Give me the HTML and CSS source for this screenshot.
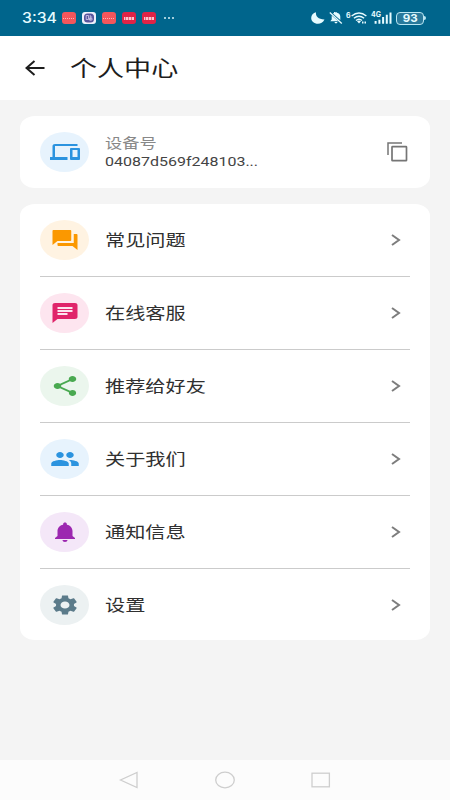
FILE: index.html
```html
<!DOCTYPE html>
<html lang="zh-CN">
<head>
<meta charset="UTF-8">
<title>个人中心</title>
<link rel="stylesheet" href="styles.css">
</head>
<body>
<div class="screen">
  <div class="status">
    <span class="time"><span class="wide">3:34</span></span>
    <div class="apps">
      <i class="app coral"></i>
      <i class="app pale"><svg viewBox="0 0 14 12"><rect x="2" y="1.5" width="10" height="9" rx="3.5" fill="#58549c"/><path d="M4.2 3.5h2.3v4H4.2zM8.2 3v5.500M8.200 5h2M7.500 8h2.500V6.300H7.500z" fill="none" stroke="#d5cfee" stroke-width=".8"/></svg></i>
      <i class="app coral"></i>
      <i class="app red"></i>
      <i class="app red"></i>
    </div>
    <div class="dots"><i></i><i></i><i></i></div>
    <div class="signals">
      <svg class="moon" viewBox="0 0 14 12"><path d="M5 .3C4.300 4 7.500 7.600 13.500 7.500C12 10.500 9.500 11.800 7 11.800C3 11.800.2 9.200.2 6C.2 3.300 2.200 1 5 .3Z" fill="#e6fbff"/></svg>
      <svg class="mute" viewBox="0 0 14 12"><path d="M3.900 1.600C4.500 1 5.500.9 6 .7C6.300-.1 7.700-.1 8 .7C10 1 11.300 2.700 11.300 4.500V8ZM2.700 3.400L9.300 9.300H1.300L2.700 7.500ZM5.400 10H8.600C8 11.900 6 11.900 5.400 10Z" fill="#e6fbff"/><path d="M.8.600L12.800 11.400" stroke="#e6fbff" stroke-width="1.300"/></svg>
      <span class="six">6</span>
      <svg class="wifi" viewBox="0 0 16 12"><g fill="none" stroke="#e6fbff" stroke-width="1.400"><path d="M.6 4Q8-2 15.400 4M2.900 6.300Q8 2 13.100 6.300M5 8.500Q8 5.800 11 8.500"/></g><path d="M6 9.300Q8 7.700 10 9.300L8 11.600Z" fill="#e6fbff"/><path d="M11 9.500h1.500V11.500H11zM13.500 9.500H15V11.500h-1.500z" fill="#e6fbff"/></svg>
      <div class="cell"><span class="gen">4G</span><svg viewBox="0 0 18 12"><path d="M.6 9h2v2.700h-2zM4.400 7.800h2v3.900h-2zM8.100 5h2v6.700h-2zM11.800 2.800h2v8.900h-2zM15.500.5h2v11.200h-2z" fill="#e6fbff"/></svg></div>
      <div class="battery"><span>93</span></div><i class="cap"></i>
    </div>
  </div>

  <header class="header">
    <svg class="back" viewBox="0 0 20 18"><path d="M19.500 9H1.500M9.500 2L1.500 9L9.500 16" fill="none" stroke="#1d1d1d" stroke-width="2"/></svg>
    <h1><span class="wide">个人中心</span></h1>
  </header>

  <main class="content">
    <section class="card device">
      <div class="bubble blue"><svg viewBox="0 0 24 24" preserveAspectRatio="none"><path d="M4 6h18V4H4c-1.100 0-2 .9-2 2v11H0v3h14v-3H4V6zm19 2h-6c-.55 0-1 .45-1 1v10c0 .55.45 1 1 1h6c.55 0 1-.45 1-1V9c0-.55-.45-1-1-1zm-1 9h-4v-7h4v7z"/></svg></div>
      <div class="info">
        <div class="caption"><span class="wide">设备号</span></div>
        <div class="number"><span class="wide">04087d569f248103...</span></div>
      </div>
      <svg class="copy" viewBox="0 0 21 20"><path d="M1 13V1H15" fill="none" stroke="#757575" stroke-width="1.500"/><rect x="5" y="4.700" width="14.500" height="14" rx=".5" fill="none" stroke="#757575" stroke-width="1.700"/></svg>
    </section>

    <section class="card menu">
      <div class="row">
        <div class="bubble orange"><svg viewBox="0 0 24 24" preserveAspectRatio="none"><path d="M21 6h-2v9H6v2c0 .55.45 1 1 1h11l4 4V7c0-.55-.45-1-1-1zm-4 6V3c0-.55-.45-1-1-1H3c-.55 0-1 .45-1 1v14l4-4h10c.55 0 1-.45 1-1z"/></svg></div>
        <span class="label wide">常见问题</span>
        <svg class="chevron" viewBox="0 0 10 12"><path d="M1 1L8 6L1 11"/></svg>
      </div>
      <div class="row">
        <div class="bubble pink"><svg viewBox="0 0 24 24" preserveAspectRatio="none"><path d="M20 2H4c-1.100 0-1.990.9-1.990 2L2 22l4-4h14c1.100 0 2-.9 2-2V4c0-1.100-.9-2-2-2zM6 9h12v2H6V9zm8 5H6v-2h8v2zm4-6H6V6h12v2z"/></svg></div>
        <span class="label wide">在线客服</span>
        <svg class="chevron" viewBox="0 0 10 12"><path d="M1 1L8 6L1 11"/></svg>
      </div>
      <div class="row">
        <div class="bubble green"><svg viewBox="0 0 24 24" preserveAspectRatio="none"><path d="M18 16.080c-.76 0-1.440.3-1.960.77L8.910 12.700c.05-.23.09-.46.09-.7s-.04-.47-.09-.7l7.050-4.110c.54.5 1.250.81 2.040.81 1.660 0 3-1.340 3-3s-1.340-3-3-3-3 1.340-3 3c0 .24.04.47.09.7L8.040 9.810C7.500 9.310 6.790 9 6 9c-1.660 0-3 1.340-3 3s1.340 3 3 3c.79 0 1.500-.31 2.040-.81l7.120 4.160c-.05.21-.08.43-.08.65 0 1.610 1.310 2.920 2.920 2.920s2.920-1.310 2.920-2.920-1.310-2.920-2.920-2.920z"/></svg></div>
        <span class="label wide">推荐给好友</span>
        <svg class="chevron" viewBox="0 0 10 12"><path d="M1 1L8 6L1 11"/></svg>
      </div>
      <div class="row">
        <div class="bubble blue"><svg viewBox="0 0 24 24" preserveAspectRatio="none"><path d="M16 11c1.660 0 2.990-1.340 2.990-3S17.660 5 16 5s-3 1.340-3 3 1.340 3 3 3zm-8 0c1.660 0 2.990-1.340 2.990-3S9.660 5 8 5 5 6.340 5 8s1.340 3 3 3zm0 2c-2.330 0-7 1.170-7 3.500V19h14v-2.500c0-2.330-4.670-3.500-7-3.500zm8 0c-.29 0-.62.02-.97.05 1.160.84 1.970 1.970 1.970 3.450V19h6v-2.500c0-2.330-4.670-3.500-7-3.500z"/></svg></div>
        <span class="label wide">关于我们</span>
        <svg class="chevron" viewBox="0 0 10 12"><path d="M1 1L8 6L1 11"/></svg>
      </div>
      <div class="row">
        <div class="bubble purple"><svg viewBox="0 0 24 24" preserveAspectRatio="none"><path d="M12 22c1.100 0 2-.9 2-2h-4c0 1.100.89 2 2 2zm6-6v-5c0-3.070-1.640-5.640-4.500-6.320V4c0-.83-.67-1.500-1.500-1.500s-1.500.67-1.500 1.500v.68C7.630 5.360 6 7.920 6 11v5l-2 2v1h16v-1l-2-2z"/></svg></div>
        <span class="label wide">通知信息</span>
        <svg class="chevron" viewBox="0 0 10 12"><path d="M1 1L8 6L1 11"/></svg>
      </div>
      <div class="row">
        <div class="bubble slate"><svg viewBox="0 0 24 24" preserveAspectRatio="none"><path d="M19.140 12.940c.04-.3.06-.61.06-.94 0-.32-.02-.64-.07-.94l2.030-1.580c.18-.14.23-.41.12-.61l-1.920-3.320c-.12-.22-.37-.29-.59-.22l-2.390.96c-.5-.38-1.030-.7-1.620-.94l-.36-2.540c-.04-.24-.24-.41-.48-.41h-3.840c-.24 0-.43.17-.47.41l-.36 2.540c-.59.24-1.130.57-1.620.94l-2.390-.96c-.22-.08-.47 0-.59.22L2.740 8.870c-.12.21-.08.47.12.61l2.030 1.580c-.05.3-.09.63-.09.94s.02.64.07.94l-2.030 1.580c-.18.14-.23.41-.12.61l1.920 3.320c.12.22.37.29.59.22l2.390-.96c.5.38 1.030.7 1.620.94l.36 2.540c.05.24.24.41.48.41h3.840c.24 0 .44-.17.47-.41l.36-2.540c.59-.24 1.130-.56 1.620-.94l2.390.96c.22.08.47 0 .59-.22l1.920-3.320c.12-.22.07-.47-.12-.61l-2.010-1.580zM12 15.600c-1.980 0-3.600-1.620-3.600-3.600s1.620-3.600 3.600-3.600 3.600 1.620 3.600 3.600-1.620 3.600-3.600 3.600z"/></svg></div>
        <span class="label wide">设置</span>
        <svg class="chevron" viewBox="0 0 10 12"><path d="M1 1L8 6L1 11"/></svg>
      </div>
    </section>
  </main>

  <nav class="navbar">
    <svg viewBox="0 0 20 18"><path d="M18 1.500V16.500L1.500 9Z"/></svg>
    <svg viewBox="0 0 20 18"><ellipse cx="10" cy="9" rx="9.300" ry="7.800"/></svg>
    <svg viewBox="0 0 20 18"><rect x="1" y="2.200" width="17.400" height="13.600"/></svg>
  </nav>
</div>
</body>
</html>
```

FILE: styles.css
```css
* {
  box-sizing: border-box;
}

body {
  margin: 0;
  font-family: Roboto, "Noto Sans CJK SC", sans-serif;
}

.screen {
  width: 450px;
  height: 800px;
  display: flex;
  flex-direction: column;
  overflow: hidden;
  background: #f4f4f4;
}

svg {
  display: block;
  flex: none;
}

.wide {
  display: inline-block;
  white-space: nowrap;
  transform: scaleX(1.23);
  transform-origin: left center;
}

.status {
  height: 36px;
  flex: none;
  display: flex;
  align-items: center;
  padding: 0 24px 0 22px;
  background: #00658c;
  color: #e6fbff;
}

.time {
  width: 39.5px;
  font: 500 14.5px/20px Inter, sans-serif;
}

.time .wide {
  transform: scaleX(1.09);
}

.apps {
  display: flex;
  gap: 6px;
}

.app {
  width: 14px;
  height: 12px;
  border-radius: 3px;
  display: flex;
  align-items: center;
  justify-content: center;
}

.app svg {
  width: 14px;
  height: 12px;
}

.coral {
  background: #f4565c;
}

.coral::after {
  content: "";
  width: 11px;
  border-top: 1px dotted #ffb5b5;
}

.pale {
  background: #eef0fb;
}

.red {
  background: #df2346;
}

.red::after {
  content: "";
  width: 10px;
  height: 3px;
  background: repeating-linear-gradient(90deg, #ffc4cd 0 1px, #e86a80 1px 2px, #ffc4cd 2px 3px);
}

.dots {
  display: flex;
  gap: 2px;
  margin-left: 8px;
}

.dots i {
  width: 2px;
  height: 2px;
  border-radius: 1px;
  background: #d8f0f7;
}

.signals {
  display: flex;
  align-items: center;
  margin-left: auto;
}

.moon {
  width: 14px;
  height: 12px;
}

.mute {
  width: 14px;
  height: 12px;
  margin-left: 4px;
}

.six {
  width: 5px;
  margin-left: 3px;
  font: 700 7px/8px Inter, sans-serif;
  align-self: flex-start;
}

.wifi {
  width: 16px;
  height: 12px;
}

.cell {
  position: relative;
  margin-left: 7px;
}

.cell svg {
  width: 18px;
  height: 12px;
}

.gen {
  position: absolute;
  left: -3px;
  top: -1px;
  font: 700 7px/7px Inter, sans-serif;
}

.battery {
  width: 28px;
  height: 13px;
  margin-left: 4px;
  border: 1.5px solid #b9e6f3;
  border-radius: 4px;
  background: #28799b;
  display: flex;
  align-items: center;
  justify-content: center;
  font: 700 11px/11px Inter, sans-serif;
}

.battery span {
  transform: scaleX(1.05);
}

.cap {
  width: 2px;
  height: 4px;
  border-radius: 0 2px 2px 0;
  background: #b9e6f3;
}

.header {
  height: 64px;
  flex: none;
  display: flex;
  align-items: center;
  padding-left: 25px;
  background: #fff;
}

.back {
  width: 20px;
  height: 18px;
}

.header h1 {
  margin: 2px 0 0 25px;
  font-size: 22px;
  line-height: 32px;
  font-weight: 400;
  color: #1d1d1d;
}

.content {
  flex: 1;
  padding: 16px 20px 0;
}

.card {
  background: #fff;
  border-radius: 15px / 12px;
  padding: 0 20px;
}

.device {
  height: 72px;
  display: flex;
  align-items: center;
  margin-bottom: 16px;
}

.bubble {
  width: 49px;
  height: 40px;
  flex: none;
  border-radius: 50%;
  display: flex;
  align-items: center;
  justify-content: center;
}

.bubble svg {
  width: 30px;
  height: 24px;
  fill: currentColor;
}

.blue {
  background: #e7f3fd;
  color: #2b93df;
}

.orange {
  background: #fff3e2;
  color: #fb9800;
}

.pink {
  background: #fde5ef;
  color: #e0246a;
}

.green {
  background: #ebf6ed;
  color: #49a950;
}

.purple {
  background: #f4e7f8;
  color: #9c27b0;
}

.slate {
  background: #ecf1f2;
  color: #5b7b8a;
}

.info {
  flex: 1;
  margin-left: 15.5px;
}

.caption {
  height: 19px;
  font-size: 14px;
  line-height: 19px;
  color: #888;
}

.number {
  height: 18px;
  font-size: 13px;
  line-height: 17px;
  color: #444;
}

.copy {
  width: 21px;
  height: 20px;
  margin-right: 2px;
}

.row {
  height: 73px;
  display: flex;
  align-items: center;
  border-bottom: 1px solid #cbcbcb;
}

.row:last-child {
  height: 71px;
  border-bottom: 0;
}

.label {
  margin-left: 15.5px;
  padding-top: 2px;
  font-size: 16.4px;
  line-height: 24px;
  color: #303030;
}

.chevron {
  width: 10px;
  height: 12px;
  margin: 0 9px 0 auto;
  fill: none;
  stroke: #7d7d7d;
  stroke-width: 2;
}

.navbar {
  height: 40px;
  flex: none;
  display: flex;
  align-items: center;
  justify-content: center;
  gap: 76px;
  background: #fcfcfc;
}

.navbar svg {
  width: 20px;
  height: 18px;
  fill: none;
  stroke: #cecece;
  stroke-width: 1.3;
}
```
